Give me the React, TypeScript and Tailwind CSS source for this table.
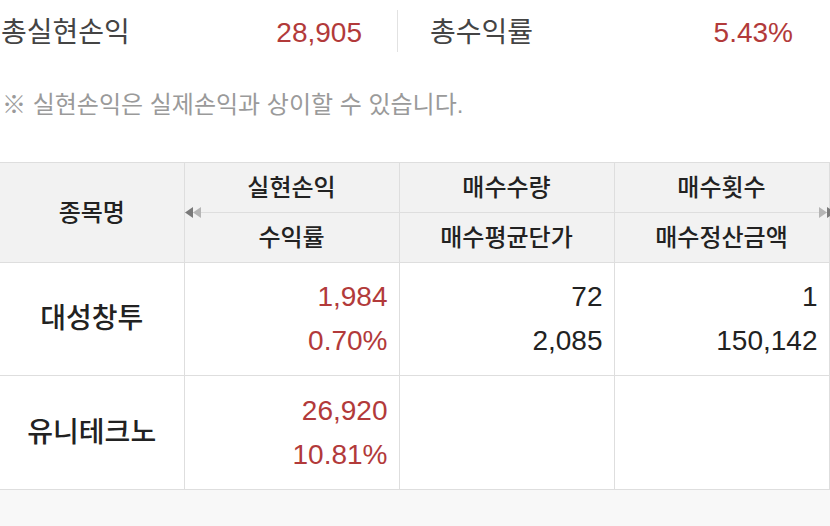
import React from "react";

const FONT = {
  fontFamily: '"Liberation Sans", "Noto Sans CJK KR", sans-serif',
};

type Row = {
  name: string;
  profit: string;
  rate: string;
  qty?: string;
  avg?: string;
  count?: string;
  amount?: string;
};

const rows: Row[] = [
  {
    name: "대성창투",
    profit: "1,984",
    rate: "0.70%",
    qty: "72",
    avg: "2,085",
    count: "1",
    amount: "150,142",
  },
  { name: "유니테크노", profit: "26,920", rate: "10.81%" },
];

function Arrows({ dir }: { dir: "left" | "right" }) {
  if (dir === "left") {
    return (
      <svg width="18" height="11" viewBox="0 0 18 11">
        <path d="M0 5.5 L8 0 L8 11 Z" fill="#7a7a7a" />
        <path d="M8 5.5 L16 0 L16 11 Z" fill="#b5b5b5" />
      </svg>
    );
  }
  return (
    <svg width="18" height="11" viewBox="0 0 18 11">
      <path d="M2 0 L10 5.5 L2 11 Z" fill="#b5b5b5" />
      <path d="M10 0 L18 5.5 L10 11 Z" fill="#7a7a7a" />
    </svg>
  );
}

export default function App() {
  const cell = "border-b border-r border-[#dedede]";
  return (
    <div className="w-[830px] h-[526px] bg-white overflow-hidden flex flex-col" style={FONT}>
      {/* summary */}
      <div className="flex items-center h-[66px]">
        <div className="w-[397px] flex items-center justify-between pl-[1px] pr-[35px]">
          <span className="text-[28px] text-[#444]">총실현손익</span>
          <span className="text-[28px] text-[#b23a3a]">28,905</span>
        </div>
        <div className="w-px h-[42px] bg-[#e2e2e2] -mt-[4px]" />
        <div className="flex-1 flex items-center justify-between pl-[32px] pr-[37px]">
          <span className="text-[28px] text-[#444]">총수익률</span>
          <span className="text-[28px] text-[#b23a3a]">5.43%</span>
        </div>
      </div>

      <div className="mt-[24px] h-[30px] pl-[2px] flex items-center text-[24px] text-[#9a9a9a]">
        ※ 실현손익은 실제손익과 상이할 수 있습니다.
      </div>

      {/* table */}
      <div className="relative mt-[42px]">
        <table className="table-fixed border-collapse w-[829px]">
          <colgroup>
            <col className="w-[184px]" />
            <col className="w-[215px]" />
            <col className="w-[215px]" />
            <col className="w-[215px]" />
          </colgroup>
          <thead className="bg-[#f2f2f2] text-[24px] text-[#222]">
            <tr className="h-[50px]">
              <th rowSpan={2} className={`border-t ${cell} font-medium`}>
                종목명
              </th>
              <th className={`border-t ${cell} font-medium`}>실현손익</th>
              <th className={`border-t ${cell} font-medium`}>매수수량</th>
              <th className={`border-t ${cell} font-medium`}>매수횟수</th>
            </tr>
            <tr className="h-[50px]">
              <th className={`${cell} font-medium`}>수익률</th>
              <th className={`${cell} font-medium`}>매수평균단가</th>
              <th className={`${cell} font-medium`}>매수정산금액</th>
            </tr>
          </thead>
          <tbody>
            {rows.map((r, i) => (
              <tr key={r.name} className={i === 0 ? "h-[113px]" : "h-[114px]"}>
                <td className={`${cell} text-center text-[28px] font-medium text-[#222]`}>
                  {r.name}
                </td>
                <td className={`${cell} text-right pr-[11px] text-[28px] leading-[44px] text-[#b23a3a]`}>
                  <div>{r.profit}</div>
                  <div>{r.rate}</div>
                </td>
                <td className={`${cell} text-right pr-[11px] text-[28px] leading-[44px] text-[#222]`}>
                  <div>{r.qty}</div>
                  <div>{r.avg}</div>
                </td>
                <td className={`${cell} text-right pr-[11px] text-[28px] leading-[44px] text-[#222]`}>
                  <div>{r.count}</div>
                  <div>{r.amount}</div>
                </td>
              </tr>
            ))}
          </tbody>
        </table>
        <div className="absolute left-[185px] top-[45px]">
          <Arrows dir="left" />
        </div>
        <div className="absolute left-[817px] top-[45px]">
          <Arrows dir="right" />
        </div>
      </div>

      <div className="flex-1 bg-[#f8f8f8]" />
    </div>
  );
}
